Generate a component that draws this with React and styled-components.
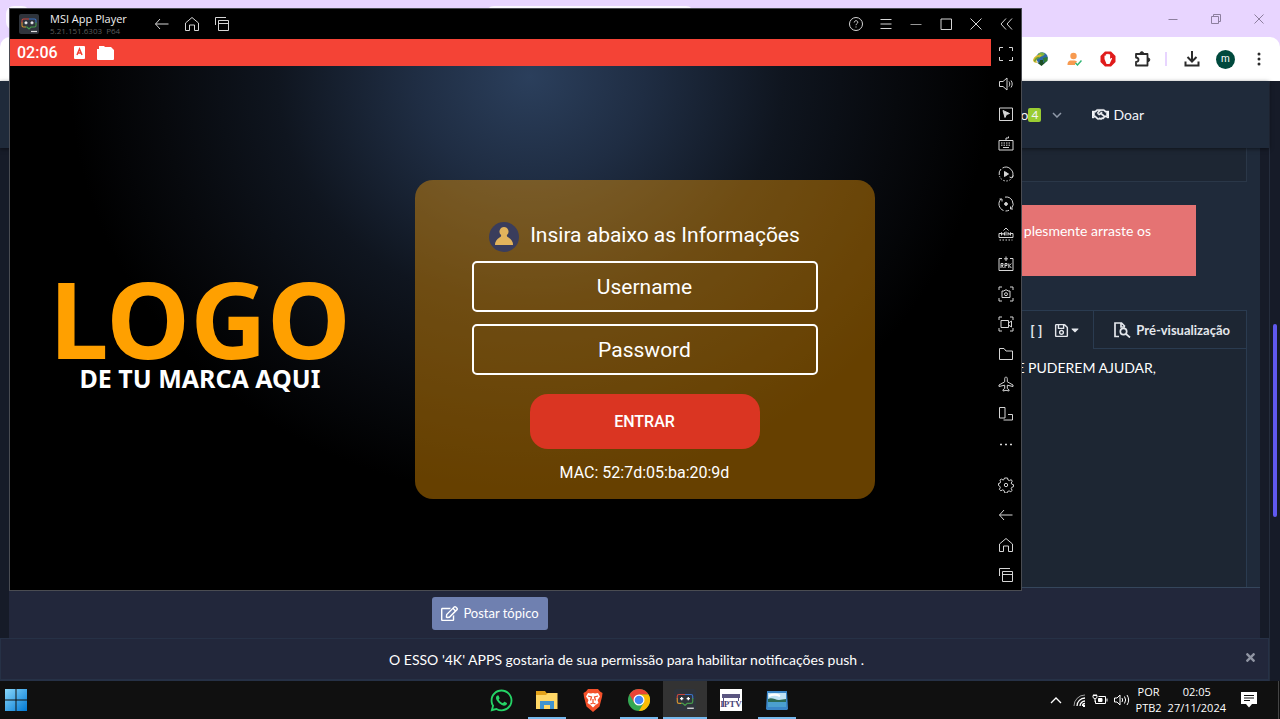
import React, { useState } from 'react'
import styled, { createGlobalStyle } from 'styled-components'
import { FaWhatsapp, FaRegHandshake, FaRegSave, FaRegEdit, FaCaretDown, FaTimes } from 'react-icons/fa'

const GlobalStyle = createGlobalStyle`
    * {
        box-sizing: border-box;
    }
    body {
        margin: 0;
        background: #101010;
        font-family: Lato, "Open Sans", sans-serif;
    }
    button, input {
        font: inherit;
        color: inherit;
    }
`

// line icons of the player, all on a 16px grid
const icons = {
    back: <path d="M6 3 1.500 8 6 13M1.500 8h13" />,
    home: <path d="M1.500 7 8 1.500 14.500 7v7.500h-4V9h-5v5.500h-4z" />,
    windows: <path d="M1.500 9V1.500H12M4.500 4.500h10v10h-10zM4.500 7.500h10" />,
    help: (
        <>
            <circle cx="8" cy="8" r="6.500" />
            <path d="M6.200 6.500c0-2.400 3.600-2.300 3.600-.2 0 1.400-1.800 1.300-1.800 2.900M8 10.500v1" />
        </>
    ),
    menu: <path d="M2.500 3.500h11M2.500 8h11M2.500 12.500h11" />,
    minimize: <path d="M2.500 8.500h11" opacity=".7" />,
    maximize: <path d="M3 3h10.500v10.500H3z" />,
    close: <path d="m2.500 2.500 11 11m0-11-11 11" />,
    collapse: <path d="M8 2.500 3 8l5 5.500M14 2.500 9 8l5 5.500" />,
    fullscreen: <path d="M1.500 5V1.500H5M11 1.500h3.500V5M14.500 11v3.500H11M5 14.500H1.500V11" />,
    volume: <path d="M1.500 5.500h3.500l4-3.500v12l-4-3.500H1.500zM11 5.500c1 1.500 1 3.500 0 5M13 4.500c1.600 2 1.600 5 0 7" />,
    cursor: (
        <>
            <path d="M1.500 2h13v12.500h-13z" />
            <path d="m5 4.500 6.500 3-3 1-1.500 3z" fill="currentColor" />
        </>
    ),
    keyboard: (
        <>
            <path d="M1 4.500h14v9.500H1zM8 4.500V2h2.500V.5" />
            <path d="M3 7h10M3 9.200h10" strokeDasharray="1.500 1" />
            <path d="M5 11.500h6" />
        </>
    ),
    play: (
        <>
            <path d="M1.200 9A7 7 0 0 1 3 3M4.500 2A7 7 0 0 1 14 11.500M15.500 9.500 14 12l-2.500-1" />
            <path d="M12.500 13.500A7 7 0 0 1 1.500 10" strokeDasharray="1.500 1.500" />
            <path d="m6.500 5.500 4 2.500-4 2.500z" fill="currentColor" />
        </>
    ),
    record: (
        <>
            <path d="M5.500 14.500A7 7 0 0 1 3 3M1.500 3H4v2.500M7 1.100A7 7 0 0 1 13.500 12.500M15 13h-2.500v-2.500M7.500 15q2 0 3.500-.7" />
            <circle cx="8" cy="8" r="1.400" fill="currentColor" />
        </>
    ),
    macro: (
        <>
            <path d="M3.500 7.500H1v4h14v-4h-2.500M5.500 4.500 8 2l2.500 2.500" />
            <path d="M3.500 9.500v-3l1.500 2 1.500-2v3M8 9.500v-4M10 9.500v-3l1.300 2 1.200-2v3" />
            <path d="M1.500 14h13" strokeDasharray="1.500 1.500" />
        </>
    ),
    apk: (
        <>
            <path d="M4 2.500H1v12h14v-12h-3M8 .5V5M6 2.800h4" />
            <path d="M3 12V7.500h2v2H3.500l2 2.500M7 12V7.500h2v2H7M10.800 7.500V12M13.300 7.500l-2 2 2 2.500" />
        </>
    ),
    camera: (
        <>
            <path d="M1 4V1h3M12 1h3v3M15 12v3h-3M4 15H1v-3M4 5h2l1-1h2l1 1h2v6.500H4z" />
            <circle cx="8" cy="8.200" r="1.500" />
        </>
    ),
    video: <path d="M1 4V1h3M12 1h3v3M15 12v3h-3M4 15H1v-3M3 4.500h7.500v7H3zM10.500 7l3-2v6l-3-2" />,
    folder: <path d="M1.500 2.500H6l2 2.500h6.500v8.500h-13z" />,
    plane: <path d="M8 1c-.9 0-1.300 1-1.300 2.200v2.600L1 9v1.500l5.700-1.300v3.300L5 13.800V15l3-.7 3 .7v-1.200l-1.700-1.300V9.200l5.700 1.300V9L9.300 5.800V3.200C9.300 2 8.900 1 8 1z" />,
    rotate: <path d="M1.500 1.500H7V12H1.500zM10 8.500h4.500v5.500H5.500" />,
    more: <path d="M2 8.500h2M7 8.500h2M12 8.500h2" strokeWidth="1.600" />,
    settings: (
        <>
            <path d="M6.500 1h3l.5 2 1.500.6L13.200 2.600l1 1.600-1 1.900.6 1.100 1.700.5v2l-1.700.6-.6 1.400 1 1.700-1.400 1.300-1.700-.8-1.500.6-.5 1.500h-2.200L6 13.500l-1.500-.6-1.700.9-1.400-1.500.9-1.700-.5-1.300L.5 8.500v-2l1.500-.4.6-1.300-.7-1.700 1.500-1 1.700.9L6 2.500z" />
            <circle cx="8" cy="8" r="1.700" />
        </>
    ),
}

const sideTools = [
    'collapse', 'fullscreen', 'volume', 'cursor', 'keyboard', 'play', 'record', 'macro',
    'apk', 'camera', 'video', 'folder', 'plane', 'rotate', 'more',
]

function ToolButton({ name }) {
    return (
        <StyledToolButton type="button" aria-label={name}>
            <LineIcon name={name} />
        </StyledToolButton>
    )
}

function LineIcon({ name }) {
    return (
        <svg width="16" height="16" viewBox="0 0 16 16" fill="none" stroke="currentColor" strokeWidth="1">
            {icons[name]}
        </svg>
    )
}

function PlayerLogo({ size }) {
    return (
        <svg width={size} height={size} viewBox="0 0 20 20" fill="none">
            <rect width="20" height="20" rx="2" fill="#2f343c" />
            <path d="M10 5H4.500Q3 5 3 6.500V9" stroke="#c9473f" strokeWidth="1.100" />
            <path d="M3 8.500v3q0 1.500 1.500 1.500H7" stroke="#d3922f" strokeWidth="1.100" />
            <path d="M10 5h5.500Q17 5 17 6.500V9" stroke="#3a70c4" strokeWidth="1.100" />
            <path d="M17 8.500v3q0 1.500-1.500 1.500H12l-2 2-2-2H6.500" stroke="#469a4b" strokeWidth="1.100" />
            <path d="M5.500 8.800h3M7 7.300v3M11.500 8.800h3M13 7.300v3" stroke="#fff" strokeWidth="1.200" />
            <path d="M12 17.500h6" stroke="#ddd" strokeWidth="1.200" />
        </svg>
    )
}

function BrowserTop() {
    return (
        <>
            <TabStrip>
                <TabPill $size={24} />
                <TabGap />
                <TabPill $size={208} />
                <WindowControls>
                    <WindowButton type="button" aria-label="Minimizar">
                        <svg width="12" height="12" viewBox="0 0 12 12" fill="none" stroke="currentColor"><path d="M1.500 6.500h9" /></svg>
                    </WindowButton>
                    <WindowButton type="button" aria-label="Restaurar">
                        <svg width="12" height="12" viewBox="0 0 12 12" fill="none" stroke="currentColor"><path d="M1.500 3.500h7v7h-7zM3.500 3.500v-2h7v7h-2" /></svg>
                    </WindowButton>
                    <WindowButton type="button" aria-label="Fechar">
                        <svg width="12" height="12" viewBox="0 0 12 12" fill="none" stroke="currentColor"><path d="m1.500 1.500 9 9m0-9-9 9" /></svg>
                    </WindowButton>
                </WindowControls>
            </TabStrip>
            <Toolbar>
                <ToolbarItem type="button" aria-label="IDM">
                    <svg width="17" height="16" viewBox="0 0 17 16">
                        <circle cx="10" cy="7" r="5.800" fill="#2d68a8" />
                        <path d="M6 3c2-2 5-2 7 0l-2 2-3 1z" fill="#7cb342" />
                        <path d="m11 7 4.500-1v4L12 12z" fill="#2e7d32" />
                        <path d="M1 9C2 5 6 3 10 4L7 7c-2 0-3 2-2 5-2 0-4-1-4-3z" fill="#d9b92e" />
                        <path d="M2.500 10.500q1.500-4 5-4" fill="none" stroke="#5f9f3a" strokeWidth="1.300" />
                        <path d="M5 11.500h2.500L8 9h3v2.500h2.500L9.500 15z" fill="#1b4f24" />
                    </svg>
                </ToolbarItem>
                <ToolbarItem type="button" aria-label="Conta">
                    <svg width="15" height="15" viewBox="0 0 15 15">
                        <circle cx="6.500" cy="4" r="3.200" fill="#f79a50" />
                        <path d="M.5 13c0-5 3-4.500 6-4.500 1.500 0 2.500.2 3.500 1L8 12v1z" fill="#f79a50" />
                        <path d="m8.500 11 2 2L14.500 8.500" fill="none" stroke="#2fb574" strokeWidth="1.500" />
                    </svg>
                </ToolbarItem>
                <ToolbarItem type="button" aria-label="Bloqueador">
                    <svg width="16" height="16" viewBox="0 0 16 16">
                        <path d="M5 .5h6L15.500 5v6L11 15.500H5L.5 11V5z" fill="#e01b1b" />
                        <path d="M4.500 8V4.800q.7-.6 1.300 0V3.500q.8-.8 1.400 0V3q.8-.7 1.500 0v.6q.8-.7 1.400 0V8l1-1q1-.4 1 .5L10.500 11 9.500 13h-3z" fill="#fff" />
                    </svg>
                </ToolbarItem>
                <ToolbarItem type="button" aria-label="Extensões">
                    <svg width="17" height="17" viewBox="0 0 17 17" fill="none" stroke="currentColor" strokeWidth="1.800">
                        <path d="M2 3h11.500v11.500H2V11q2.500-.3 2.500-2.300T2 6.500z" strokeLinejoin="round" />
                        <path d="M6 2.500a1.800 1.800 0 0 1 3.600 0zM14 7a1.800 1.800 0 0 1 0 3.600z" fill="currentColor" strokeWidth="1" />
                    </svg>
                </ToolbarItem>
                <ToolbarLine />
                <ToolbarItem type="button" aria-label="Downloads">
                    <svg width="16" height="16" viewBox="0 0 16 16" fill="none" stroke="currentColor" strokeWidth="2">
                        <path d="M8 0v10M3.500 6 8 10.500 12.500 6M1.500 10.500v4h13v-4" />
                    </svg>
                </ToolbarItem>
                <Profile type="button">m</Profile>
                <ToolbarItem type="button" aria-label="Menu">
                    <svg width="4" height="14" viewBox="0 0 4 14" fill="currentColor">
                        <circle cx="2" cy="2" r="1.500" />
                        <circle cx="2" cy="7" r="1.500" />
                        <circle cx="2" cy="12" r="1.500" />
                    </svg>
                </ToolbarItem>
            </Toolbar>
        </>
    )
}

function Forum() {
    const [asking, setAsking] = useState(true)

    return (
        <ForumPage>
            <ForumMain>
                <ForumHeader>
                    <NavItem href="#">
                        o<Badge>4</Badge>
                        <NavArrow width="10" height="6" viewBox="0 0 10 6" fill="none" stroke="currentColor" strokeWidth="1.500">
                            <path d="m1 1 4 4 4-4" />
                        </NavArrow>
                    </NavItem>
                    <NavItem href="#">
                        <FaRegHandshake size={17} stroke="currentColor" strokeWidth={20} />
                        <NavLabel>Doar</NavLabel>
                    </NavItem>
                </ForumHeader>
                <ForumBody>
                    <Field />
                    <Alert>plesmente arraste os</Alert>
                    <Editor>
                        <EditorBar>
                            <EditorButton type="button">[ ]</EditorButton>
                            <EditorButton type="button" aria-label="Rascunhos">
                                <FaRegSave size={15} />
                                <FaCaretDown size={12} />
                            </EditorButton>
                            <PreviewButton type="button">
                                <svg width="17" height="16" viewBox="0 0 17 16" fill="none" stroke="currentColor" strokeWidth="1.700">
                                    <path d="M5 14.500H1V1h6.500L11 4.500M7 1v4h4" />
                                    <circle cx="9.500" cy="9.500" r="3.200" />
                                    <path d="m12 12 4 3.500" />
                                </svg>
                                Pré-visualização
                            </PreviewButton>
                        </EditorBar>
                        <EditorText>E PUDEREM AJUDAR,</EditorText>
                    </Editor>
                </ForumBody>
                <ForumFooter>
                    <PostButton type="button">
                        <FaRegEdit size={17} />
                        Postar tópico
                    </PostButton>
                </ForumFooter>
                {asking && (
                    <PushBar>
                        <PushText>O ESSO '4K' APPS gostaria de sua permissão para habilitar notificações push .</PushText>
                        <PushClose type="button" aria-label="Fechar" onClick={() => setAsking(false)}>
                            <FaTimes size={13} />
                        </PushClose>
                    </PushBar>
                )}
            </ForumMain>
            <ScrollTrack>
                <ScrollThumb />
            </ScrollTrack>
        </ForumPage>
    )
}

function LoginCard() {
    return (
        <Card onSubmit={(e) => e.preventDefault()}>
            <CardTitle>
                <svg width="30" height="30" viewBox="0 0 30 30">
                    <circle cx="15" cy="15" r="15" fill="#3a3d5c" />
                    <path d="M15 5a4.600 4.600 0 0 1 3 8q-.6 1.500 1.500 2.500 4.500 2.500 4.500 7.500H6q0-5 4.500-7.500 2.100-1 1.500-2.500a4.600 4.600 0 0 1 3-8z" fill="#e3b45c" />
                </svg>
                Insira abaixo as Informações
            </CardTitle>
            <CardInput type="text" placeholder="Username" aria-label="Username" />
            <CardInput type="password" placeholder="Password" aria-label="Password" />
            <EnterButton type="submit">ENTRAR</EnterButton>
            <Mac>MAC: 52:7d:05:ba:20:9d</Mac>
        </Card>
    )
}

function Player() {
    return (
        <PlayerWindow>
            <PlayerMain>
                <PlayerTitle>
                    <PlayerLogo size={20} />
                    <PlayerName>
                        <span>MSI App Player</span>
                        <Version>5.21.151.6303  P64</Version>
                    </PlayerName>
                    <ToolButton name="back" />
                    <ToolButton name="home" />
                    <ToolButton name="windows" />
                    <Spacer />
                    <ToolButton name="help" />
                    <ToolButton name="menu" />
                    <ToolButton name="minimize" />
                    <ToolButton name="maximize" />
                    <ToolButton name="close" />
                </PlayerTitle>
                <StatusBar>
                    <span>02:06</span>
                    <svg width="11" height="13" viewBox="0 0 11 13">
                        <rect width="11" height="13" rx="1" fill="#fff" />
                        <path d="m3 9 2.500-6L8 9M4 7h3" fill="none" stroke="#f44336" strokeWidth="1.500" />
                    </svg>
                    <svg width="17" height="14" viewBox="0 0 17 14">
                        <path d="M2 0h5l1 1h6l3 3v9q0 1-1 1H1q-1 0-1-1V3h2z" fill="#fff" />
                    </svg>
                </StatusBar>
                <Screen>
                    <Brand>
                        <BrandName>LOGO</BrandName>
                        <BrandLine>DE TU MARCA AQUI</BrandLine>
                    </Brand>
                    <CardArea>
                        <LoginCard />
                    </CardArea>
                </Screen>
            </PlayerMain>
            <SideBar>
                {sideTools.map((name) => <ToolButton key={name} name={name} />)}
                <Spacer />
                <ToolButton name="settings" />
                <ToolButton name="back" />
                <ToolButton name="home" />
                <ToolButton name="windows" />
            </SideBar>
        </PlayerWindow>
    )
}

function TaskBar() {
    return (
        <StyledTaskBar>
            <StartButton type="button" aria-label="Iniciar">
                <svg width="22" height="22" viewBox="0 0 22 22">
                    <defs>
                        <linearGradient id="win" x1="0" y1="0" x2="1" y2="1">
                            <stop offset="0" stopColor="#8ad8fb" />
                            <stop offset="1" stopColor="#0078d4" />
                        </linearGradient>
                    </defs>
                    <path d="M0 0h10.500v10.500H0zM11.500 0H22v10.500H11.500zM0 11.500h10.500V22H0zM11.500 11.500H22V22H11.500z" fill="url(#win)" />
                </svg>
            </StartButton>
            <Apps>
                <AppButton type="button" aria-label="WhatsApp">
                    <FaWhatsapp size={25} color="#25d366" />
                </AppButton>
                <AppButton type="button" aria-label="Explorador" $open>
                    <svg width="22" height="20" viewBox="0 0 22 20">
                        <path d="M0 1h9l1.500 2H21v16H0z" fill="#e3a21a" />
                        <path d="M0 5h10l2-2h9.500v16H0z" fill="#ffd766" />
                        <path d="M4 19v-8h14v8h-4v-4H8v4z" fill="#3f93d0" />
                    </svg>
                </AppButton>
                <AppButton type="button" aria-label="Brave">
                    <svg width="20" height="23" viewBox="0 0 20 23">
                        <path d="m5 0-2 2.500L.5 4 1 8l2.500 9.500L10 23l6.500-5.500L19 8l.5-4L17 2.500 15 0z" fill="#f4502a" />
                        <path d="m5 4 3 .5L10 4l2 .5L15 4l2 3.500-2.500 3.500 1 3-3 2L10 18.500 7.500 16l-3-2 1-3L3 7.500z" fill="#fff" />
                        <path d="m5 7 3.500 1-1 3.500M15 7l-3.500 1 1 3.500M10 10v4M7.500 15l2.500-1 2.500 1" fill="none" stroke="#f4502a" strokeWidth="1.300" />
                    </svg>
                </AppButton>
                <AppButton type="button" aria-label="Chrome" $open>
                    <svg width="22" height="22" viewBox="0 0 22 22">
                        <circle cx="11" cy="11" r="11" fill="#34a853" />
                        <path d="M1.470 5.500A11 11 0 0 1 20.530 5.500H11L6.240 13.750z" fill="#ea4335" />
                        <path d="M20.530 5.500A11 11 0 0 1 11 22l4.760-8.250L11 5.500z" fill="#fbbc05" />
                        <circle cx="11" cy="11" r="5.500" fill="#fff" />
                        <circle cx="11" cy="11" r="4.300" fill="#4285f4" />
                    </svg>
                </AppButton>
                <AppButton type="button" aria-label="MSI App Player" $open $active>
                    <PlayerLogo size={22} />
                </AppButton>
                <AppButton type="button" aria-label="IPTV">
                    <svg width="22" height="22" viewBox="0 0 22 22">
                        <rect width="22" height="22" fill="#fff" />
                        <path d="M2 5h18v4H2z" fill="#5a5580" />
                        <text x="11" y="18" textAnchor="middle" fontFamily="Liberation Serif, serif" fontWeight="700" fontSize="9" fill="#4b4678">IPTV</text>
                        <path d="M3.500 9v9M18.500 9v3" stroke="#5a5580" />
                    </svg>
                </AppButton>
                <AppButton type="button" aria-label="Fotos" $open>
                    <svg width="22" height="19" viewBox="0 0 22 19">
                        <path d="M1 0h20v1l1 17-1 1H1l-1-1L1 1z" fill="#3a86c8" />
                        <path d="M2 2h18v14H2z" fill="#bfe2f5" />
                        <path d="M2 8c4-2 7 1 11 1l7-1v3H2z" fill="#2d6a55" />
                        <path d="M2 11h18v5H2z" fill="#4ba0cf" />
                        <path d="M3 5c4-2 7-2 11 0" stroke="#fff" strokeWidth="2" fill="none" />
                    </svg>
                </AppButton>
            </Apps>
            <Tray>
                <TrayArrow width="12" height="8" viewBox="0 0 12 8" fill="none" stroke="currentColor" strokeWidth="1.300">
                    <path d="m1 7 5-5 5 5" />
                </TrayArrow>
                <svg width="13" height="13" viewBox="0 0 13 13" fill="none" stroke="currentColor">
                    <path d="M1 12A11 11 0 0 1 12 1" opacity=".6" />
                    <path d="M4 12a8 8 0 0 1 8-8M7 12a5 5 0 0 1 5-5M9.500 12A2.500 2.500 0 0 1 12 9.500" strokeWidth="1.300" />
                    <path d="M10 12h2" strokeWidth="2" />
                </svg>
                <svg width="16" height="12" viewBox="0 0 16 12" fill="none" stroke="currentColor">
                    <path d="M6.500 2.500h7v7H3.500v-3M15 4.500v3" />
                    <path d="M6.500 4.500h3.500v3H6.500z" fill="currentColor" />
                    <path d="M1 1.500h4v2Q3 6.500 1 3.500zM2 0v2M4 0v2M3 5v3" />
                </svg>
                <svg width="16" height="14" viewBox="0 0 16 14" fill="none" stroke="currentColor">
                    <path d="M.5 5h2.500l3-3v10l-3-3H.5zM8 5q1.300 2 0 4M10.500 3.500q2.300 3.500 0 7M13 2q3.300 5 0 10" />
                </svg>
                <TrayText>
                    <span>POR</span>
                    <span>PTB2</span>
                </TrayText>
                <TrayText>
                    <span>02:05</span>
                    <span>27/11/2024</span>
                </TrayText>
                <NoticeButton type="button" aria-label="Notificações">
                    <svg width="16" height="16" viewBox="0 0 16 16">
                        <path d="M0 0h16v12h-5l-3 3.500L5 12H0z" fill="#fff" />
                        <path d="M3 3.500h10M3 6h10M3 8.500h6" stroke="#101010" />
                    </svg>
                </NoticeButton>
            </Tray>
        </StyledTaskBar>
    )
}

function App() {
    return (
        <Desktop>
            <GlobalStyle />
            <BrowserTop />
            <Forum />
            <TaskBar />
            <Player />
        </Desktop>
    )
}

const Desktop = styled.div`
    position: relative;
    display: flex;
    flex-direction: column;
    min-height: 100vh;
    background: #e8d5ff;
    overflow: hidden;
`
const Spacer = styled.div`
    flex: 1;
`

const TabStrip = styled.div`
    display: flex;
    height: 37px;
    padding: 6px 6px 0;
`
const TabPill = styled.div`
    width: ${(props) => props.$size}px;
    height: 24px;
    border-radius: 8px;
    background: #fbf8ff;
`
const TabGap = styled.div`
    width: 36%;
`
const WindowControls = styled.div`
    display: flex;
    margin-left: auto;
`
const WindowButton = styled.button`
    display: grid;
    place-items: center;
    width: 43px;
    height: 26px;
    padding: 0;
    border: none;
    background: none;
    color: #8d7f9e;

    &:last-child {
        width: 30px;
        margin-left: 7px;
    }
`
const Toolbar = styled.div`
    display: flex;
    align-items: center;
    justify-content: flex-end;
    height: 44px;
    padding-right: 9px;
    border-radius: 10px 10px 0 0;
    background: #fff;
    color: #2b2b2b;
`
const ToolbarItem = styled.button`
    display: grid;
    place-items: center;
    width: 24px;
    height: 24px;
    margin-left: 10px;
    padding: 0;
    border: none;
    background: none;
`
const ToolbarLine = styled.div`
    width: 2px;
    height: 14px;
    margin: 0 3px 0 11px;
    background: #e8d5ff;
`
const Profile = styled.button`
    width: 19px;
    height: 19px;
    margin: 0 2px 0 12px;
    padding: 0 0 1px;
    border: none;
    border-radius: 50%;
    background: #00493d;
    color: #fff;
    font: 10px/16px Roboto, sans-serif;
`

const ForumPage = styled.div`
    display: flex;
    flex: 1;
    background: #161b28;
    color: #fff;
`
const ForumMain = styled.div`
    display: flex;
    flex-direction: column;
    flex: 1;
`
const ForumHeader = styled.header`
    display: flex;
    align-items: center;
    justify-content: flex-end;
    gap: 30px;
    height: 67px;
    padding-right: 125px;
    background: #1f2a3a;
    box-shadow: 0 1px 4px rgba(0, 0, 0, 0.5);
    z-index: 1;
`
const NavItem = styled.a`
    display: flex;
    align-items: center;
    color: #f2f4f7;
    font-size: 14px;
    text-decoration: none;
`
const NavLabel = styled.span`
    margin-left: 4px;
`
const Badge = styled.span`
    padding: 0 3px;
    border-radius: 2px;
    background: #9acd32;
    font-size: 12px;
    line-height: 14px;
`
const NavArrow = styled.svg`
    margin-left: 11px;
    color: #8f99a8;
`
const ForumBody = styled.div`
    display: flex;
    flex-direction: column;
    flex: 1;
    margin: 0 9px;
    padding-right: 13px;
    border-bottom: 1px solid #35465c;
    background: #1f2a3a;
`
const Field = styled.div`
    height: 34px;
    border: 1px solid #2a3748;
    border-top: none;
    background: #1d2633;
`
const Alert = styled.div`
    height: 71px;
    margin: 23px 51px 34px 0;
    padding: 17px 45px;
    background: #e57373;
    font-size: 14px;
    line-height: 18px;
    text-align: right;
`
const Editor = styled.div`
    flex: 1;
    border: 1px solid #2a3b50;
    border-bottom: none;
    background: #1d2633;
`
const EditorBar = styled.div`
    display: flex;
    align-items: stretch;
    justify-content: flex-end;
    height: 38px;
`
const EditorButton = styled.button`
    display: flex;
    align-items: center;
    margin-right: 12px;
    padding: 0;
    border: none;
    background: none;
    color: #e4e7ec;
    font-size: 14px;
    font-weight: 700;
`
const PreviewButton = styled(EditorButton)`
    gap: 5px;
    margin: 0;
    padding: 0 16px 0 20px;
    border-left: 1px solid #2a3b50;
    border-bottom: 1px solid #2a3b50;
    font-size: 13px;
`
const EditorText = styled.p`
    margin: 10px 90px 0 0;
    font-size: 14px;
    line-height: 18px;
    text-align: right;
`
const ForumFooter = styled.div`
    display: flex;
    align-items: center;
    justify-content: center;
    height: 50px;
    margin: 0 9px;
    padding-right: 289px;
    background: #22273b;
`
const PostButton = styled.button`
    display: flex;
    align-items: center;
    gap: 5px;
    height: 33px;
    padding: 0 9px;
    border: none;
    border-radius: 3px;
    background: #6f80b0;
    font-size: 13px;
`
const PushBar = styled.div`
    display: flex;
    align-items: center;
    height: 43px;
    border: 1px solid #263146;
    border-bottom-width: 2px;
    background: #22273b;
`
const PushText = styled.p`
    flex: 1;
    margin: 0;
    padding-left: 20px;
    font-size: 14px;
    text-align: center;
`
const PushClose = styled.button`
    width: 36px;
    padding: 0 0 4px;
    border: none;
    background: none;
    color: #9095a3;
    line-height: 13px;
`
const ScrollTrack = styled.div`
    width: 11px;
    padding: 243px 2px 0 3px;
    border-left: 1px solid #252d3d;
`
const ScrollThumb = styled.div`
    width: 4px;
    height: 193px;
    border-radius: 2px;
    background: #6059f0;
`

const PlayerWindow = styled.section`
    position: absolute;
    top: 8px;
    right: 258px;
    bottom: 128px;
    left: 9px;
    z-index: 2;
    display: flex;
    border: 1px solid #4a4c52;
    background: #000;
    color: #d5d5d5;
`
const PlayerMain = styled.div`
    display: flex;
    flex-direction: column;
    flex: 1;
`
const PlayerTitle = styled.div`
    display: flex;
    align-items: center;
    height: 30px;
    padding-left: 9px;
`
const PlayerName = styled.div`
    display: flex;
    flex-direction: column;
    width: 108px;
    padding-left: 11px;
    color: #f0f0f0;
    font: 11px/13px "Open Sans", sans-serif;
    white-space: pre;
`
const Version = styled.span`
    color: #5c5c5c;
    font-size: 8px;
    line-height: 11px;
`
const StyledToolButton = styled.button`
    display: grid;
    place-items: center;
    width: 30px;
    height: 30px;
    padding: 0;
    border: none;
    background: none;
`
const SideBar = styled.div`
    display: flex;
    flex-direction: column;
    width: 30px;
`
const StatusBar = styled.div`
    display: flex;
    align-items: center;
    gap: 12px;
    height: 27px;
    padding-left: 7px;
    background: #f44336;
    color: #fff;
    font: 500 16px/20px Roboto, sans-serif;

    span {
        margin-right: 4px;
    }
`
const Screen = styled.div`
    display: flex;
    flex: 1;
    align-items: center;
    padding-top: 23px;
    background: radial-gradient(ellipse 460px 420px at 53% 2%, #2b3f5c 0%, #1f2d43 25%, #0f151f 55%, #07090d 80%, #000 100%), #000;
`
const Brand = styled.div`
    width: 380px;
    padding-bottom: 16px;
    font-family: "Noto Sans", sans-serif;
    font-weight: 700;
    text-align: center;
`
const BrandName = styled.div`
    color: #ffa000;
    font-size: 106px;
    line-height: 92px;
`
const BrandLine = styled.div`
    color: #fff;
    font-size: 25px;
    line-height: 28px;
`
const CardArea = styled.div`
    display: flex;
    flex: 1;
    justify-content: center;
    padding-right: 92px;
`
const Card = styled.form`
    display: flex;
    flex-direction: column;
    align-items: center;
    width: 460px;
    padding: 42px 57px 16px;
    border-radius: 18px;
    background: rgba(255, 160, 0, 0.4);
    color: #fff;
    font-family: Roboto, sans-serif;
`
const CardTitle = styled.div`
    display: flex;
    gap: 11px;
    height: 30px;
    margin-bottom: 9px;
    font-size: 21px;
    line-height: 26px;
    white-space: nowrap;
`
const CardInput = styled.input`
    width: 100%;
    height: 51px;
    margin-bottom: 12px;
    border: 2px solid #fff;
    border-radius: 5px;
    background: none;
    font-size: 21px;
    text-align: center;

    &::placeholder {
        color: #fff;
        opacity: 1;
    }
`
const EnterButton = styled.button`
    width: 230px;
    height: 55px;
    margin: 7px 0 14px;
    border: none;
    border-radius: 18px;
    background: #da3522;
    font-size: 16px;
    font-weight: 500;
`
const Mac = styled.div`
    font-size: 16px;
    line-height: 20px;
`

const StyledTaskBar = styled.footer`
    display: grid;
    grid-template-columns: 1fr auto 1fr;
    height: 38px;
    background: #101010;
    color: #fff;
`
const StartButton = styled.button`
    justify-self: start;
    display: grid;
    place-items: center;
    width: 32px;
    padding: 0;
    border: none;
    background: none;
`
const Apps = styled.div`
    display: flex;
    padding-right: 2px;
`
const AppButton = styled.button`
    display: grid;
    place-items: center;
    width: ${(props) => (props.$active ? '44px' : '38px')};
    margin: 0 ${(props) => (props.$active ? '1px' : '4px')};
    padding: 2px 0 0;
    border: none;
    border-bottom: 2px solid ${(props) => (props.$open ? '#76b9ed' : 'transparent')};
    background: ${(props) => (props.$active ? '#333' : 'none')};
`
const Tray = styled.div`
    display: flex;
    align-items: center;
    justify-content: flex-end;
    gap: 6px;
`
const TrayArrow = styled.svg`
    margin-right: 5px;
`
const TrayText = styled.div`
    display: flex;
    flex-direction: column;
    font: 11px/16px "Open Sans", sans-serif;
    text-align: center;
`
const NoticeButton = styled.button`
    align-self: stretch;
    display: grid;
    place-items: center;
    width: 47px;
    margin-right: 1px;
    padding: 0 12px 0 0;
    border: none;
    border-right: 1px solid #444;
    background: none;
`

export default App
